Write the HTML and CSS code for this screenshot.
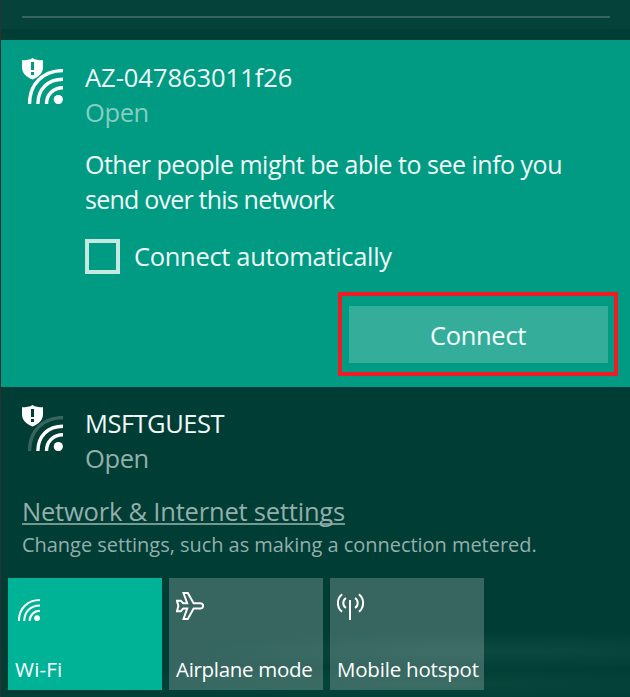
FILE: index.html
```html
<!DOCTYPE html>
<html lang="en">
<head>
<meta charset="utf-8">
<title>Network flyout</title>
<link rel="stylesheet" href="styles.css">
</head>
<body>
<svg class="defs" aria-hidden="true">
  <symbol id="shield" viewBox="0 0 21 22">
    <path fill-rule="evenodd" d="M10.5 0C13 2 17 2.200 21 2.200V9C21 15 17 19 10.500 21.500C4 19 0 15 0 9V2.200C4 2.200 8 2 10.500 0ZM9 4V12H12V4ZM9 14V17H12V14Z"/>
  </symbol>
  <symbol id="waves" viewBox="0 0 35 35">
    <path class="outer" d="M1.500 35C1.500 15 15 1.600 35 1.600"/>
    <path d="M9.900 35C9.900 20 20 10.200 35 10.200"/>
    <path d="M18.500 35C18.500 25.500 25.500 18.800 35 18.800"/>
    <circle cx="30.300" cy="30.600" r="4.600"/>
  </symbol>
</svg>
<main class="panel">
  <div class="top"><hr class="rule"></div>
  <section class="network selected">
    <div class="signal">
      <svg class="waves" viewBox="0 0 35 35"><use href="#waves"/></svg>
      <svg class="shield"><use href="#shield"/></svg>
    </div>
    <div class="details">
      <h2 class="name">AZ-047863011f26</h2>
      <p class="state">Open</p>
      <p class="info">Other people might be able to see info you<br><span class="second-line">send over this network</span></p>
      <label class="auto"><span class="box"></span><span>Connect automatically</span></label>
      <div class="highlight"><button class="connect">Connect</button></div>
    </div>
  </section>
  <section class="network">
    <div class="signal weak">
      <svg class="waves" viewBox="0 0 35 35"><use href="#waves"/></svg>
      <svg class="shield"><use href="#shield"/></svg>
    </div>
    <div class="details">
      <h2 class="name caps">MSFTGUEST</h2>
      <p class="state">Open</p>
    </div>
  </section>
  <section class="settings">
    <a class="link">Network &amp; Internet settings</a>
    <p class="hint">Change settings, such as making a connection metered.</p>
  </section>
  <div class="tiles">
    <div class="tile on">
      <svg class="icon wifi" viewBox="0 0 35 35"><use href="#waves"/></svg>
      <span class="label short">Wi-Fi</span>
    </div>
    <div class="tile">
      <svg class="icon plane" viewBox="0 0 28 28"><path d="M7.500 1H11.800L17.600 11.200H24.500C28 11.500 28 16.300 24.500 16.600H17.600L11.800 27H7.500L11.200 16.600H7.200L4.800 19.200H1L2.400 13.900L1 8.800H4.800L7.200 11.200H11.200Z"/></svg>
      <span class="label">Airplane mode</span>
    </div>
    <div class="tile">
      <svg class="icon hotspot" viewBox="0 0 28 27"><path d="M13 7V27M5.100 1.200Q.9 4.500.9 10T5.100 18.800M9 5Q6.300 6.700 6.300 10T9 15M21.900 1.200Q26.100 4.500 26.100 10T21.900 18.800M18 5Q20.700 6.700 20.700 10T18 15"/></svg>
      <span class="label wide">Mobile hotspot</span>
    </div>
  </div>
</main>
</body>
</html>
```
FILE: styles.css
```css
* { box-sizing: border-box; margin: 0; padding: 0; }
body {
  width: 630px; height: 697px; overflow: hidden;
  background: #302f34;
  font-family: "Open Sans", "Noto Sans", sans-serif;
  font-size: 25.5px; line-height: 35px; color: #f0faf8;
  padding-left: 1px;
}
.defs { display: none; }
.panel {
  height: 697px;
  background:
    radial-gradient(ellipse 330px 20px at 510px 651px, rgba(60,120,105,.2), transparent),
    radial-gradient(ellipse 420px 18px at 430px 684px, rgba(40,110,90,.2), transparent),
    #003d35;
}
.top {
  height: 40px; padding: 16px 20px 0 21px;
  background: linear-gradient(#04423a 0 29px, #003d35 29px);
}
.rule { height: 2px; border: 0; background: #37655e; }
.network { display: grid; grid-template-columns: 84px 1fr; height: 107px; padding-top: 19px; white-space: nowrap; }
.selected { height: 347px; padding-top: 20px; background: #009b82; }
.signal { position: relative; height: 46px; }
.signal svg { position: absolute; }
.signal .waves { left: 27px; top: 9px; width: 35px; height: 35px; }
.signal .shield { left: 21px; top: -2px; width: 21px; height: 22px; fill: #fff; }
.signal.weak .shield { top: -1px; }
.signal.weak .waves { top: 10px; }
.waves, .wifi { fill: none; stroke: #fff; stroke-width: 3.400; }
#waves circle { fill: #fff; stroke: none; }
.weak { --outer: #37655e; }
.outer { stroke: var(--outer, #fff); }
.name { font-size: inherit; font-weight: 400; letter-spacing: -.04px; }
.caps { letter-spacing: -.5px; }
.state { color: #86cdc1; letter-spacing: -.4px; }
.network:not(.selected) .state { color: #94afab; }
.info { margin-top: 17px; font-size: 25px; letter-spacing: -.5px; }
.second-line { letter-spacing: -.78px; }
.auto { display: flex; align-items: center; gap: 14px; margin-top: 22px; letter-spacing: -.32px; }
.box { width: 35px; height: 35px; border: 4px solid #c4e9e2; }
.highlight { width: 280px; height: 84px; margin: 18px 0 0 253px; border: 4px solid #ee1c24; padding: 10px 6px 9px 7px; }
.connect { display: block; width: 259px; height: 57px; border: 0; background: #34ae9a; color: #f5fffd; font: inherit; letter-spacing: -.3px; padding: 2px 1px 0 0; }
.settings { height: 84px; padding-left: 21px; color: #94afab; white-space: nowrap; }
.link { display: block; width: 323px; height: 31px; border-bottom: 2px solid #739791; letter-spacing: -.2px; }
.hint { margin-top: 5px; font-size: 20px; line-height: 30px; letter-spacing: -.04px; }
.tiles { display: flex; gap: 7px; padding-left: 7px; }
.tile { display: flex; flex-direction: column; justify-content: space-between; width: 154px; height: 112px; padding: 14px 7px 6px; background: rgba(255,255,255,.21); white-space: nowrap; color: #fff; }
.on { background: #00b396; }
.label { font-size: 20.5px; line-height: 30px; letter-spacing: -.3px; }
.short { letter-spacing: .2px; }
.wide { letter-spacing: -.2px; }
.icon { display: block; width: 28px; height: 28px; fill: none; stroke: #fff; stroke-width: 2; }
.icon.wifi { width: 22px; height: 22px; margin: 7px 0 0 3px; stroke-width: 3.200; }
.icon.hotspot { height: 27px; margin-top: 1px; }
```
